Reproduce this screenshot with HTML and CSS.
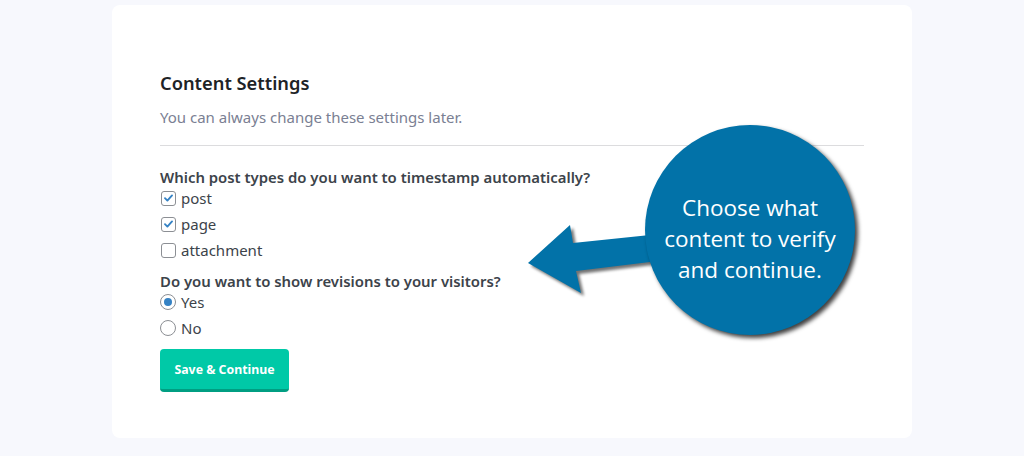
FILE: index.html
```html
<!DOCTYPE html>
<html lang="en">
<head>
<meta charset="utf-8">
<title>Content Settings</title>
<link rel="stylesheet" href="styles.css">
</head>
<body>
<main class="card">
  <h1 class="title">Content Settings</h1>
  <p class="subtitle">You can always change these settings later.</p>
  <hr class="divider">
  <div class="question">Which post types do you want to timestamp automatically?</div>
  <label class="opt"><span class="box checked"><svg viewBox="0 0 14 14" width="14" height="14"><path d="M3.2 7.2 L5.8 9.8 L10.8 4.2" fill="none" stroke="#3582c4" stroke-width="2" stroke-linecap="round" stroke-linejoin="round"/></svg></span>post</label>
  <label class="opt"><span class="box checked"><svg viewBox="0 0 14 14" width="14" height="14"><path d="M3.2 7.2 L5.8 9.8 L10.8 4.2" fill="none" stroke="#3582c4" stroke-width="2" stroke-linecap="round" stroke-linejoin="round"/></svg></span>page</label>
  <label class="opt"><span class="box"></span>attachment</label>
  <div class="question q2">Do you want to show revisions to your visitors?</div>
  <label class="opt"><span class="radio on"></span>Yes</label>
  <label class="opt"><span class="radio"></span>No</label>
  <button class="btn">Save &amp; Continue</button>

  <div class="callout">
    <svg class="arrow" viewBox="0 0 140 90" width="140" height="90">
      <defs><filter id="blur"><feGaussianBlur stdDeviation="1.5"/></filter></defs>
      <polygon points="8,48 50,10 53,28 130,20 130,47 56,56 61,78" fill="#000" opacity="0.55" transform="translate(3,3)" filter="url(#blur)"/>
      <polygon points="8,48 50,10 53,28 130,20 130,47 56,56 61,78" fill="#0272a8"/>
    </svg>
    <div class="bubble">Choose what<br>content to verify<br>and continue.</div>
  </div>
</main>
</body>
</html>
```
FILE: styles.css
```css
html, body { margin: 0; padding: 0; }
body {
  background: #f7f8fd;
  font-family: "Noto Sans", "Open Sans", sans-serif;
  height: 456px;
  overflow: hidden;
}
.card {
  position: relative;
  box-sizing: border-box;
  margin: 5px 0 0 112px;
  width: 800px;
  height: 433px;
  background: #fff;
  border-radius: 8px;
  padding: 66px 48px 0 48px;
  display: flex;
  flex-direction: column;
  align-items: flex-start;
}
.title {
  margin: 0;
  font-size: 18.3px;
  line-height: 24px;
  font-weight: 600;
  color: #1d2327;
}
.subtitle {
  margin: 11px 0 0;
  font-size: 15px;
  line-height: 22px;
  color: #7a8093;
}
.divider {
  align-self: stretch;
  margin: 17px 0 0;
  border: 0;
  border-top: 1px solid #dcdcde;
  height: 0;
}
.question {
  margin-top: 21px;
  font-size: 14.9px;
  line-height: 20px;
  font-weight: 600;
  color: #3c434a;
  white-space: nowrap;
}
.question.q2 { margin-top: 10px; }
.opt {
  display: flex;
  align-items: center;
  gap: 5px;
  height: 22px;
  margin-top: 4px;
  font-size: 15px;
  color: #3c434a;
  padding-left: 1px;
}
.question + .opt { margin-top: 0; }
.box {
  box-sizing: border-box;
  width: 15px;
  height: 15px;
  border: 1px solid #8c8f94;
  border-radius: 3px;
  display: flex;
  align-items: center;
  justify-content: center;
  background: #fff;
}
.box svg { display: block; }
.radio {
  box-sizing: border-box;
  width: 16px;
  height: 16px;
  margin-left: -1px;
  border: 1px solid #8c8f94;
  border-radius: 50%;
  display: flex;
  align-items: center;
  justify-content: center;
}
.radio.on::after {
  content: "";
  width: 8px;
  height: 8px;
  border-radius: 50%;
  background: #3582c4;
}
.btn {
  margin-top: 10px;
  width: 129px;
  height: 43px;
  border: 0;
  border-bottom: 3px solid #009e82;
  border-radius: 4px;
  background: #00c9a7;
  color: #fff;
  font-family: "Noto Sans", "Open Sans", sans-serif;
  font-weight: 700;
  font-size: 12.3px;
  padding: 0;
}
.callout {
  position: absolute;
  left: 408px;
  top: 115px;
  width: 340px;
  height: 230px;
}
.arrow {
  position: absolute;
  left: 0;
  top: 95px;
}
.bubble {
  position: absolute;
  left: 125px;
  top: 5px;
  width: 210px;
  height: 210px;
  border-radius: 50%;
  background: #0272a8;
  box-shadow: 3px 3px 4px rgba(0,0,0,0.75);
  display: flex;
  align-items: center;
  justify-content: center;
  text-align: center;
  color: #fff;
  font-family: "Open Sans", "Noto Sans", sans-serif;
  font-size: 22.5px;
  line-height: 31px;
  padding-top: 16px;
  box-sizing: border-box;
}
```
